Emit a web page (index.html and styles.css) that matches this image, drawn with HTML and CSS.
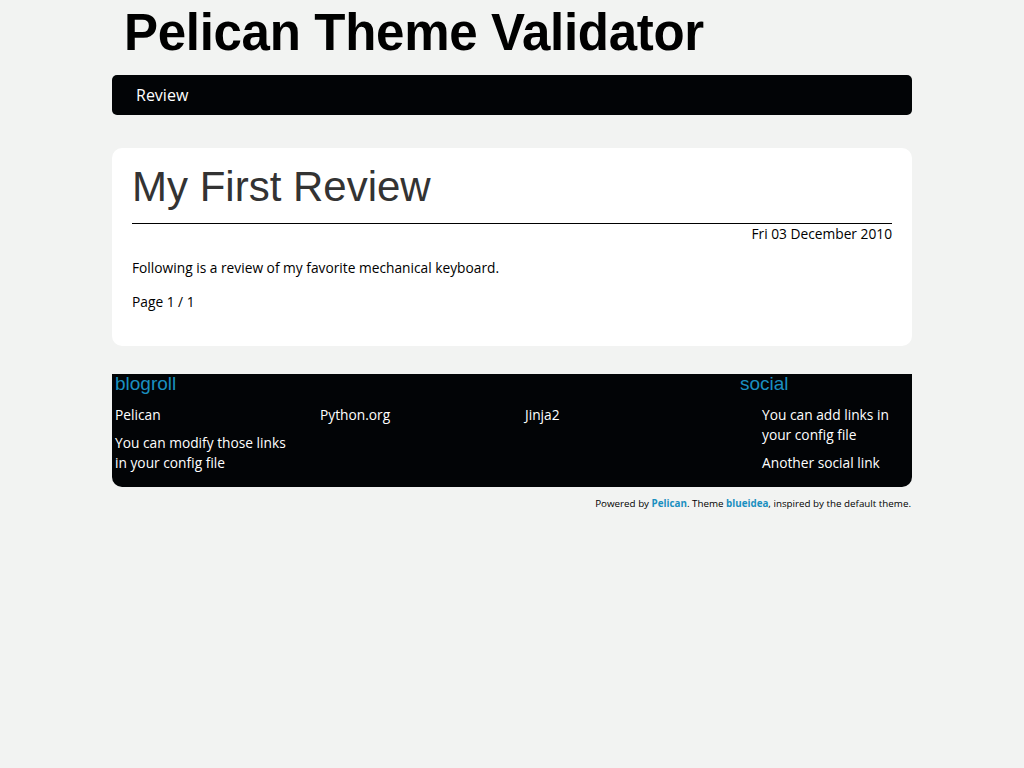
FILE: index.html
```html
<!DOCTYPE html>
<html lang="en">
<head>
<meta charset="utf-8">
<title>Pelican Theme Validator</title>
<link rel="stylesheet" href="styles.css">
</head>
<body>
<div class="wrap">
  <header class="site-header">
    <h1 class="site-title">Pelican Theme Validator</h1>
  </header>
  <nav class="menu">
    <a href="#" class="menu-item">Review</a>
  </nav>
  <article class="post">
    <h2 class="post-title">My First Review</h2>
    <div class="post-date">Fri 03 December 2010</div>
    <p class="post-text">Following is a review of my favorite mechanical keyboard.</p>
    <p class="post-text">Page 1 / 1</p>
  </article>
  <footer class="extras">
    <div class="blogroll">
      <h3 class="extras-title">blogroll</h3>
      <ul class="blogroll-list">
        <li>Pelican</li>
        <li>Python.org</li>
        <li>Jinja2</li>
        <li>You can modify those links in your config file</li>
      </ul>
    </div>
    <div class="social">
      <h3 class="extras-title">social</h3>
      <ul class="social-list">
        <li>You can add links in your config file</li>
        <li>Another social link</li>
      </ul>
    </div>
  </footer>
  <p class="powered">Powered by <a href="#">Pelican</a>. Theme <a href="#">blueidea</a>, inspired by the default theme.</p>
</div>
</body>
</html>
```

FILE: styles.css
```css
html, body {
  margin: 0;
  padding: 0;
  background: #f2f3f2;
}
body {
  font-family: "Open Sans", "DejaVu Sans", sans-serif;
  font-size: 13.75px;
  color: #000;
}
.wrap {
  width: 800px;
  margin: 0 auto;
}
.site-header {
  padding: 4px 0 0 12px;
  height: 75px;
  box-sizing: border-box;
}
.site-title {
  margin: 0;
  font-family: "Liberation Sans", Arial, sans-serif;
  font-weight: bold;
  font-size: 51px;
  line-height: 58px;
  color: #000;
  letter-spacing: -0.3px;
}
.menu {
  background: #020406;
  border-radius: 5px;
  height: 40px;
  display: flex;
  align-items: center;
  padding-left: 24px;
}
.menu-item {
  color: #fff;
  text-decoration: none;
  font-size: 16px;
}
.post {
  margin-top: 33px;
  background: #fff;
  border-radius: 10px;
  padding: 14px 20px 34px;
}
.post-title {
  margin: 0;
  font-family: "Liberation Sans", Arial, sans-serif;
  font-weight: normal;
  font-size: 42px;
  line-height: 50px;
  color: #333;
  padding-bottom: 11px;
  border-bottom: 1px solid #000;
}
.post-date {
  text-align: right;
  line-height: 20px;
}
.post-text {
  margin: 14px 0 0;
  line-height: 20px;
}
.extras {
  margin-top: 28px;
  background: #020406;
  border-radius: 0 0 10px 10px;
  display: flex;
  color: #fff;
  padding: 0 0 6px 3px;
  min-height: 107px;
  box-sizing: border-box;
  height: 113px;
}
.extras-title {
  margin: 0;
  font-family: "Liberation Sans", Arial, sans-serif;
  font-weight: normal;
  font-size: 19px;
  line-height: 20px;
  color: #1a8fc0;
}
.blogroll {
  width: 625px;
}
.blogroll-list {
  list-style: none;
  margin: 11px 0 0;
  padding: 0;
  display: grid;
  grid-template-columns: 205px 205px 205px;
  row-gap: 8px;
}
.blogroll-list li, .social-list li {
  line-height: 20px;
}
.blogroll-list li:last-child {
  grid-column: 1;
  padding-right: 25px;
}
.social {
  width: 170px;
}
.social-list {
  list-style: none;
  margin: 11px 0 0;
  padding: 0 0 0 22px;
  display: flex;
  flex-direction: column;
  gap: 8px;
}
.powered {
  margin: 10px 1px 0 0;
  text-align: right;
  font-size: 9.8px;
  line-height: 13px;
}
.powered a {
  color: #1a8fc0;
  text-decoration: none;
  font-weight: bold;
}
```
